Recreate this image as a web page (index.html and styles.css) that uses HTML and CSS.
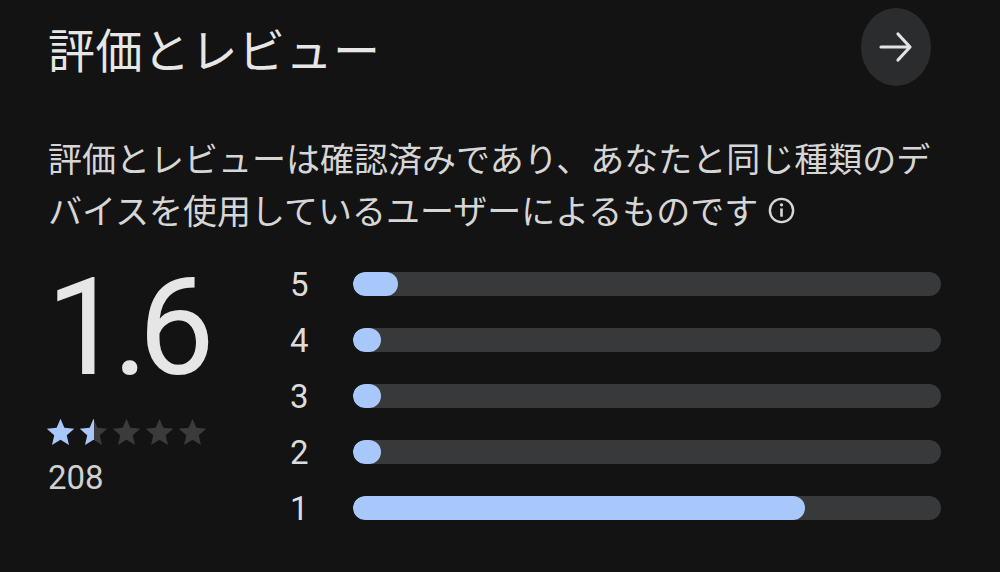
FILE: index.html
```html
<!DOCTYPE html>
<html lang="ja">
<head>
<meta charset="utf-8">
<link rel="stylesheet" href="styles.css">
</head>
<body>
<div class="page">
  <div class="header">
    <h1 class="title">評価とレビュー</h1>
    <button class="arrow-btn" aria-label="more">
      <svg width="34" height="32" viewBox="0 0 34 32"><path d="M2 16 H31 M19 3 L31 16 L19 29" fill="none" stroke="#e3e3e3" stroke-width="3.2" stroke-linecap="round" stroke-linejoin="round"/></svg>
    </button>
  </div>
  <p class="desc">評価とレビューは確認済みであり、あなたと同じ種類のデバイスを使用しているユーザーによるものです<svg class="info" width="27" height="27" viewBox="0 0 26 26"><circle cx="13" cy="13" r="11.2" fill="none" stroke="#d6d6d6" stroke-width="2.3"/><rect x="11.75" y="11" width="2.5" height="8" fill="#d6d6d6"/><circle cx="13" cy="7.5" r="1.6" fill="#d6d6d6"/></svg></p>
  <div class="rating">
    <div class="summary">
      <div class="score">1.6</div>
      <div class="stars">
        <svg width="33" height="33" viewBox="0 0 24 24"><path class="on" d="M12 17.27L18.18 21l-1.64-7.03L22 9.24l-7.19-.61L12 2 9.19 8.63 2 9.24l5.46 4.73L5.82 21z"/></svg>
        <svg width="33" height="33" viewBox="0 0 24 24"><defs><linearGradient id="half" x1="0" x2="1" y1="0" y2="0"><stop offset="52%" stop-color="#a8c7fa"/><stop offset="52%" stop-color="#3b3b3b"/></linearGradient></defs><path fill="url(#half)" d="M12 17.27L18.18 21l-1.64-7.03L22 9.24l-7.19-.61L12 2 9.19 8.63 2 9.24l5.46 4.73L5.82 21z"/></svg>
        <svg width="33" height="33" viewBox="0 0 24 24"><path class="off" d="M12 17.27L18.18 21l-1.64-7.03L22 9.24l-7.19-.61L12 2 9.19 8.63 2 9.24l5.46 4.73L5.82 21z"/></svg>
        <svg width="33" height="33" viewBox="0 0 24 24"><path class="off" d="M12 17.27L18.18 21l-1.64-7.03L22 9.24l-7.19-.61L12 2 9.19 8.63 2 9.24l5.46 4.73L5.82 21z"/></svg>
        <svg width="33" height="33" viewBox="0 0 24 24"><path class="off" d="M12 17.27L18.18 21l-1.64-7.03L22 9.24l-7.19-.61L12 2 9.19 8.63 2 9.24l5.46 4.73L5.82 21z"/></svg>
      </div>
      <div class="count">208</div>
    </div>
    <div class="bars">
      <div class="row"><span class="label">5</span><div class="track"><div class="fill" style="width:45px"></div></div></div>
      <div class="row"><span class="label">4</span><div class="track"><div class="fill" style="width:28px"></div></div></div>
      <div class="row"><span class="label">3</span><div class="track"><div class="fill" style="width:28px"></div></div></div>
      <div class="row"><span class="label">2</span><div class="track"><div class="fill" style="width:28px"></div></div></div>
      <div class="row"><span class="label">1</span><div class="track"><div class="fill" style="width:452px"></div></div></div>
    </div>
  </div>
</div>
</body>
</html>
```
FILE: styles.css
```css
html, body {
  margin: 0;
  padding: 0;
  background: #131313;
}
body {
  width: 1000px;
  height: 572px;
  overflow: hidden;
  font-family: "Noto Sans CJK JP", "Noto Sans", sans-serif;
  color: #e3e3e3;
}
.page {
  padding: 8px 59px 0 48px;
}
.header {
  display: flex;
  align-items: center;
  justify-content: space-between;
  height: 78px;
}
.title {
  margin: 0;
  font-size: 47px;
  font-weight: 400;
  line-height: 1;
  color: #e6e6e6;
  letter-spacing: 0.5px;
}
.arrow-btn {
  width: 70px;
  height: 78px;
  margin-right: 10px;
  border: none;
  border-radius: 50%;
  background: #2b2c2e;
  display: flex;
  align-items: center;
  justify-content: center;
  padding: 0;
}
.desc {
  margin: 46px 0 0 0;
  font-size: 34px;
  line-height: 52px;
  color: #d6d6d6;
}
.info {
  margin-left: 10px;
  vertical-align: 0px;
}
.rating {
  display: flex;
  margin-top: 20px;
}
.summary {
  width: 242px;
  display: flex;
  flex-direction: column;
}
.score {
  font-family: "Roboto", sans-serif;
  font-size: 136px;
  line-height: 1;
  letter-spacing: -10px;
  margin-top: 4px;
  margin-left: -2px;
  color: #e6e6e6;
}
.stars {
  display: flex;
  margin-top: 20px;
  margin-left: -4px;
}
.on { fill: #a8c7fa; }
.off { fill: #3b3b3b; }
.count {
  font-family: "Roboto", sans-serif;
  font-size: 33px;
  line-height: 1;
  margin-top: 12px;
  color: #d0d0d0;
}
.bars {
  flex: 1;
  display: flex;
  flex-direction: column;
}
.row {
  height: 56px;
  display: flex;
  align-items: center;
}
.label {
  width: 63px;
  font-family: "Roboto", sans-serif;
  font-size: 33px;
  color: #dcdcdc;
}
.track {
  flex: 1;
  height: 24px;
  border-radius: 12px;
  background: #38393b;
  overflow: hidden;
}
.fill {
  height: 100%;
  border-radius: 12px;
  background: #a8c7fa;
}
```
